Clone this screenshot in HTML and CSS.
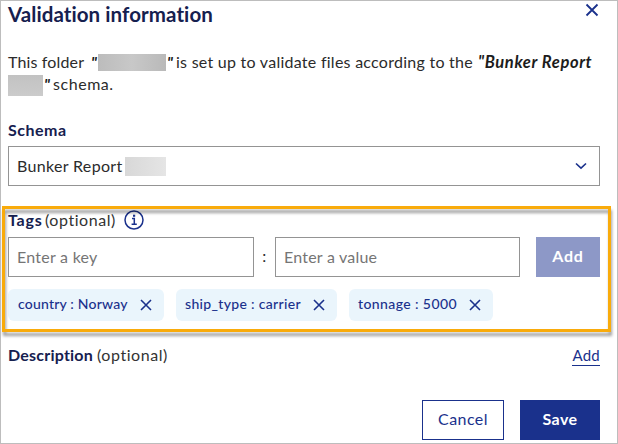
FILE: index.html
```html
<!DOCTYPE html>
<html lang="en">
<head>
<meta charset="utf-8">
<title>Validation information</title>
<link rel="stylesheet" href="styles.css">
</head>
<body>
<main class="dialog">
  <header class="header">
    <h1 class="title">Validation information</h1>
    <svg class="close" viewBox="0 0 14 14"><path d="M1.5 1.5 12.5 12.5M12.5 1.5 1.5 12.5"/></svg>
  </header>
  <div class="intro">
    <div class="line"><span class="t-folder">This folder</span><b class="q-open">"</b><i class="mask mask-folder"></i><b class="q-close">"</b><span class="t-main">is set up to validate files according to the</span><b class="t-schema">"Bunker Report</b></div>
    <div class="line line-second"><i class="mask mask-schema"></i><b class="q-close">"</b><span class="t-end">schema.</span></div>
  </div>
  <div class="label label-schema">Schema</div>
  <div class="select"><span class="select-text">Bunker Report</span><i class="mask mask-select"></i>
    <svg class="chevron" viewBox="0 0 12 8"><path d="M1 1.5 6 6.2 11 1.5"/></svg>
  </div>
  <section class="tags">
    <div class="tags-label"><span class="label label-tags">Tags</span><span class="optional">(optional)</span>
      <svg class="info" viewBox="0 0 20 20"><circle cx="10" cy="10" r="9"/><path d="M8 8.6H10.3V14M7.6 14.2H12.8"/><rect x="9" y="4.7" width="2.2" height="2.1"/></svg>
    </div>
    <div class="fields">
      <div class="input input-key">Enter a key</div>
      <span class="colon">:</span>
      <div class="input input-value">Enter a value</div>
      <div class="add">Add</div>
    </div>
    <div class="chips">
      <div class="chip chip-country"><span>country : Norway</span><svg viewBox="0 0 12 12"><path d="M1 1 11 11M11 1 1 11"/></svg></div>
      <div class="chip chip-ship"><span>ship_type : carrier</span><svg viewBox="0 0 12 12"><path d="M1 1 11 11M11 1 1 11"/></svg></div>
      <div class="chip chip-tonnage"><span>tonnage : 5000</span><svg viewBox="0 0 12 12"><path d="M1 1 11 11M11 1 1 11"/></svg></div>
    </div>
  </section>
  <div class="description"><span class="label label-desc">Description</span><span class="optional">(optional)</span><a class="link">Add</a></div>
  <footer class="actions">
    <div class="button cancel">Cancel</div>
    <div class="button save">Save</div>
  </footer>
</main>
</body>
</html>
```

FILE: styles.css
```css
* { box-sizing: border-box; }
body { margin: 0; background: #fff; }
.dialog {
  width: 618px; height: 444px; overflow: hidden;
  border: 1px solid #bdbdbd; padding: 0 17px 0 7px;
  font: 16px/22px Lato, "Liberation Sans", sans-serif; color: #2b2b2b;
  letter-spacing: .26px; white-space: nowrap;
}
svg { display: block; flex: none; fill: none; stroke: #1a318c; stroke-width: 1.6; }
.header { display: flex; justify-content: space-between; height: 50px; }
.title { margin: 0; font-size: 20.5px; line-height: 27px; font-weight: 700; letter-spacing: .08px; color: #16204f; }
.close { width: 14px; height: 14px; margin: 2px 1px 0 0; stroke-width: 1.8; }
.intro { height: 68px; }
.line { display: flex; height: 22.5px; line-height: 21px; }
.line-second { line-height: 20px; }
.line b { font-style: italic; color: #1c1c1c; }
.mask { display: block; flex: none; }
.mask-folder { width: 68px; height: 17px; margin-top: 3px; background: linear-gradient(90deg, #bcbcbc, #c8c8c8 50%, #b9b9b9); }
.mask-schema { width: 35px; height: 21px; margin-top: 1.5px; background: linear-gradient(#c2c2c2, #cbcbcb); }
.mask-select { width: 41px; height: 19px; background: linear-gradient(90deg, #d8d8d8, #e5e5e5); }
.t-folder { width: 83px; letter-spacing: .15px; }
.q-open { width: 7px; }
.q-close { width: 10px; padding-left: 1px; }
.t-main { width: 302px; }
.t-schema { font-size: 16.5px; line-height: 23px; letter-spacing: .6px; }
.t-end { letter-spacing: .55px; }
.label { font-weight: 700; color: #16204f; }
.label-schema { height: 27px; letter-spacing: .5px; }
.select { display: flex; align-items: center; height: 40px; border: 1px solid #949494; padding: 0 12px 0 8px; }
.select-text { width: 108px; letter-spacing: .33px; }
.chevron { width: 12px; height: 8px; margin-left: auto; }
.tags { position: relative; width: 609px; height: 126px; margin: 20px 0 0 -6px; padding: 4px 0 0 6px; }
.tags::after {
  content: ""; position: absolute; inset: 0; pointer-events: none;
  border: 3px solid #f9ab0b; filter: drop-shadow(1px 4px 1.5px rgba(0,0,0,.38));
}
.tags-label { display: flex; height: 27px; line-height: 20px; }
.label-tags { width: 37px; letter-spacing: .75px; }
.optional { color: #333; letter-spacing: .55px; }
.info { width: 20px; height: 20px; margin: 0 0 0 8px; stroke-width: 1.5; }
.info rect { fill: #1a318c; stroke: none; }
.fields { display: flex; height: 40px; line-height: 38px; }
.input { border: 1px solid #949494; padding-left: 8px; color: #757575; background: #fff; }
.input-key { width: 246px; }
.input-value { width: 245px; letter-spacing: .22px; }
.colon { width: 21px; text-align: center; }
.add { width: 64px; margin-left: 16px; background: #8d98c7; color: #fff; font-weight: 700; text-align: center; letter-spacing: .8px; }
.chips { display: flex; gap: 12px; margin-top: 12px; }
.chip { display: flex; align-items: center; justify-content: space-between; height: 32px; padding: 0 12px 2px 10px; border-radius: 6px; background: #eaf5fc; color: #1a318c; font-size: 14px; font-weight: 500; }
.chip svg { width: 12px; height: 12px; margin-top: 2px; }
.chip-country { width: 156px; letter-spacing: .2px; }
.chip-ship { width: 161px; padding-left: 9px; letter-spacing: .32px; }
.chip-tonnage { width: 144px; padding-left: 9px; letter-spacing: .4px; }
.description { display: flex; margin-top: 13px; height: 55px; line-height: 20px; }
.label-desc { width: 89px; letter-spacing: .22px; }
.link { height: 21px; margin-left: auto; border-bottom: 1px solid #1a318c; line-height: 21px; color: #1a318c; font-size: 15px; }
.actions { display: flex; justify-content: flex-end; gap: 16px; line-height: 36px; text-align: center; }
.button { height: 40px; border: 1px solid #1a318c; }
.cancel { width: 82px; color: #1a318c; letter-spacing: .45px; }
.save { width: 80px; background: #1a318c; color: #fff; font-weight: 700; letter-spacing: .4px; }
```
